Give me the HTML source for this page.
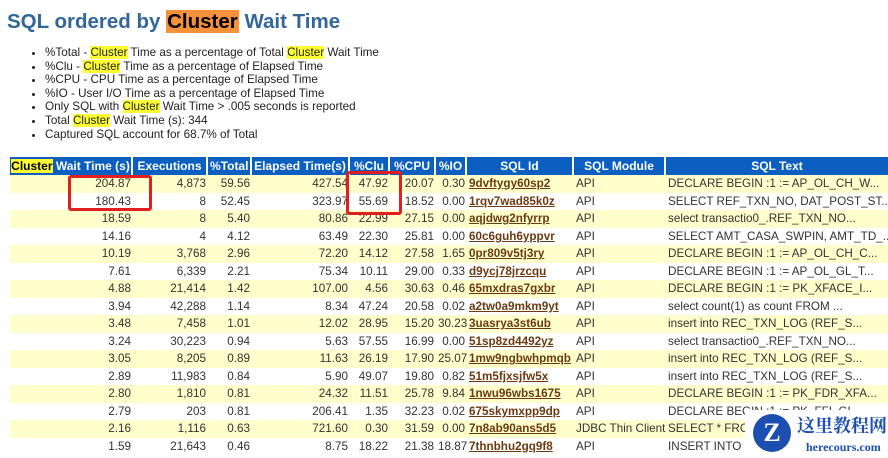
<!DOCTYPE html>
<html><head><meta charset="utf-8"><style>
body{margin:0;background:#fff;font-family:"Liberation Sans",Arial,sans-serif;width:888px;height:458px;overflow:hidden;position:relative}
h1{position:absolute;left:7px;top:10px;margin:0;font-size:20.5px;font-weight:bold;color:#336699}
.or{background:#f5913a;color:#000;padding:0 1px}
ul{position:absolute;left:30px;top:46px;margin:0;padding:0 0 0 15px;font-size:11.7px;color:#222;line-height:13.6px}
.y{background:#ffff33}
table{position:absolute;left:10px;top:157px;width:878px;table-layout:fixed;border-collapse:separate;border-spacing:0;font-size:11.7px;color:#333}
th{box-sizing:border-box;background:#0a5fc0;color:#fff;font-weight:bold;height:18px;padding:0 2px;border-right:2px solid #fff;white-space:nowrap;text-align:center;overflow:hidden;font-size:12px}
td{height:17.5px;padding:0 2px;white-space:nowrap;text-align:right;overflow:hidden}
tr:nth-child(even) td{background:#ffffcc}
td.l{text-align:left}
a{color:#6b3a10;font-weight:bold;text-decoration:underline}
.box{position:absolute;border:3px solid #e02020;border-radius:3px}
</style></head><body>
<h1>SQL ordered by <span class="or">Cluster</span> Wait Time</h1>
<ul>
<li>%Total - <span class="y">Cluster</span> Time as a percentage of Total <span class="y">Cluster</span> Wait Time</li>
<li>%Clu - <span class="y">Cluster</span> Time as a percentage of Elapsed Time</li>
<li>%CPU - CPU Time as a percentage of Elapsed Time</li>
<li>%IO - User I/O Time as a percentage of Elapsed Time</li>
<li>Only SQL with <span class="y">Cluster</span> Wait Time &gt; .005 seconds is reported</li>
<li>Total <span class="y">Cluster</span> Wait Time (s): 344</li>
<li>Captured SQL account for 68.7% of Total</li>
</ul>
<table>
<tr><th style="width:123px;padding:0"><span style="background:#ffff33;color:#000">Cluster</span> Wait Time (s)</th><th style="width:75px">Executions</th><th style="width:44px">%Total</th><th style="width:98px">Elapsed Time(s)</th><th style="width:40px">%Clu</th><th style="width:46px">%CPU</th><th style="width:31px">%IO</th><th style="width:107px">SQL Id</th><th style="width:92px">SQL Module</th><th style="width:222px;border:0">SQL Text</th></tr>
<tr><td>204.87</td><td>4,873</td><td>59.56</td><td>427.54</td><td>47.92</td><td>20.07</td><td>0.30</td><td class="l"><a>9dvftygy60sp2</a></td><td class="l">API</td><td class="l">DECLARE BEGIN :1 := AP_OL_CH_W...</td></tr>
<tr><td>180.43</td><td>8</td><td>52.45</td><td>323.97</td><td>55.69</td><td>18.52</td><td>0.00</td><td class="l"><a>1rqv7wad85k0z</a></td><td class="l">API</td><td class="l">SELECT REF_TXN_NO, DAT_POST_ST...</td></tr>
<tr><td>18.59</td><td>8</td><td>5.40</td><td>80.86</td><td>22.99</td><td>27.15</td><td>0.00</td><td class="l"><a>aqjdwg2nfyrrp</a></td><td class="l">API</td><td class="l">select transactio0_.REF_TXN_NO...</td></tr>
<tr><td>14.16</td><td>4</td><td>4.12</td><td>63.49</td><td>22.30</td><td>25.81</td><td>0.00</td><td class="l"><a>60c6guh6yppvr</a></td><td class="l">API</td><td class="l">SELECT AMT_CASA_SWPIN, AMT_TD_...</td></tr>
<tr><td>10.19</td><td>3,768</td><td>2.96</td><td>72.20</td><td>14.12</td><td>27.58</td><td>1.65</td><td class="l"><a>0pr809v5tj3ry</a></td><td class="l">API</td><td class="l">DECLARE BEGIN :1 := AP_OL_CH_C...</td></tr>
<tr><td>7.61</td><td>6,339</td><td>2.21</td><td>75.34</td><td>10.11</td><td>29.00</td><td>0.33</td><td class="l"><a>d9ycj78jrzcqu</a></td><td class="l">API</td><td class="l">DECLARE BEGIN :1 := AP_OL_GL_T...</td></tr>
<tr><td>4.88</td><td>21,414</td><td>1.42</td><td>107.00</td><td>4.56</td><td>30.63</td><td>0.46</td><td class="l"><a>65mxdras7gxbr</a></td><td class="l">API</td><td class="l">DECLARE BEGIN :1 := PK_XFACE_I...</td></tr>
<tr><td>3.94</td><td>42,288</td><td>1.14</td><td>8.34</td><td>47.24</td><td>20.58</td><td>0.02</td><td class="l"><a>a2tw0a9mkm9yt</a></td><td class="l">API</td><td class="l">select count(1) as count FROM ...</td></tr>
<tr><td>3.48</td><td>7,458</td><td>1.01</td><td>12.02</td><td>28.95</td><td>15.20</td><td>30.23</td><td class="l"><a>3uasrya3st6ub</a></td><td class="l">API</td><td class="l">insert into REC_TXN_LOG (REF_S...</td></tr>
<tr><td>3.24</td><td>30,223</td><td>0.94</td><td>5.63</td><td>57.55</td><td>16.99</td><td>0.00</td><td class="l"><a>51sp8zd4492yz</a></td><td class="l">API</td><td class="l">select transactio0_.REF_TXN_NO...</td></tr>
<tr><td>3.05</td><td>8,205</td><td>0.89</td><td>11.63</td><td>26.19</td><td>17.90</td><td>25.07</td><td class="l"><a>1mw9ngbwhpmqb</a></td><td class="l">API</td><td class="l">insert into REC_TXN_LOG (REF_S...</td></tr>
<tr><td>2.89</td><td>11,983</td><td>0.84</td><td>5.90</td><td>49.07</td><td>19.80</td><td>0.82</td><td class="l"><a>51m5fjxsjfw5x</a></td><td class="l">API</td><td class="l">insert into REC_TXN_LOG (REF_S...</td></tr>
<tr><td>2.80</td><td>1,810</td><td>0.81</td><td>24.32</td><td>11.51</td><td>25.78</td><td>9.84</td><td class="l"><a>1nwu96wbs1675</a></td><td class="l">API</td><td class="l">DECLARE BEGIN :1 := PK_FDR_XFA...</td></tr>
<tr><td>2.79</td><td>203</td><td>0.81</td><td>206.41</td><td>1.35</td><td>32.23</td><td>0.02</td><td class="l"><a>675skymxpp9dp</a></td><td class="l">API</td><td class="l">DECLARE BEGIN :1 := PK_FFI_GL_...</td></tr>
<tr><td>2.16</td><td>1,116</td><td>0.63</td><td>721.60</td><td>0.30</td><td>31.59</td><td>0.00</td><td class="l"><a>7n8ab90ans5d5</a></td><td class="l">JDBC Thin Client</td><td class="l">SELECT * FROM ...</td></tr>
<tr><td>1.59</td><td>21,643</td><td>0.46</td><td>8.75</td><td>18.22</td><td>21.38</td><td>18.87</td><td class="l"><a>7thnbhu2gq9f8</a></td><td class="l">API</td><td class="l">INSERT INTO ...</td></tr>
</table>
<div class="box" style="left:68px;top:175px;width:78px;height:30px"></div>
<div class="box" style="left:346px;top:171px;width:50px;height:38px"></div>
<div style="position:absolute;left:745px;top:410px;width:143px;height:48px;background:#fff"></div>
<div style="position:absolute;left:753px;top:414px;width:38px;height:38px;border-radius:50%;background:#1d4fb0;color:#fff;font:bold 26px 'Liberation Serif',serif;text-align:center;line-height:38px">Z</div>
<div style="position:absolute;left:797px;top:414px;font:bold 18px 'Noto Serif CJK SC',serif;color:#1d4fb0;white-space:nowrap;line-height:22px">这里教程网</div>
<div style="position:absolute;left:806px;top:440px;font:bold 12px 'Liberation Serif',serif;color:#1d4fb0">herecours.com</div>
</body></html>
